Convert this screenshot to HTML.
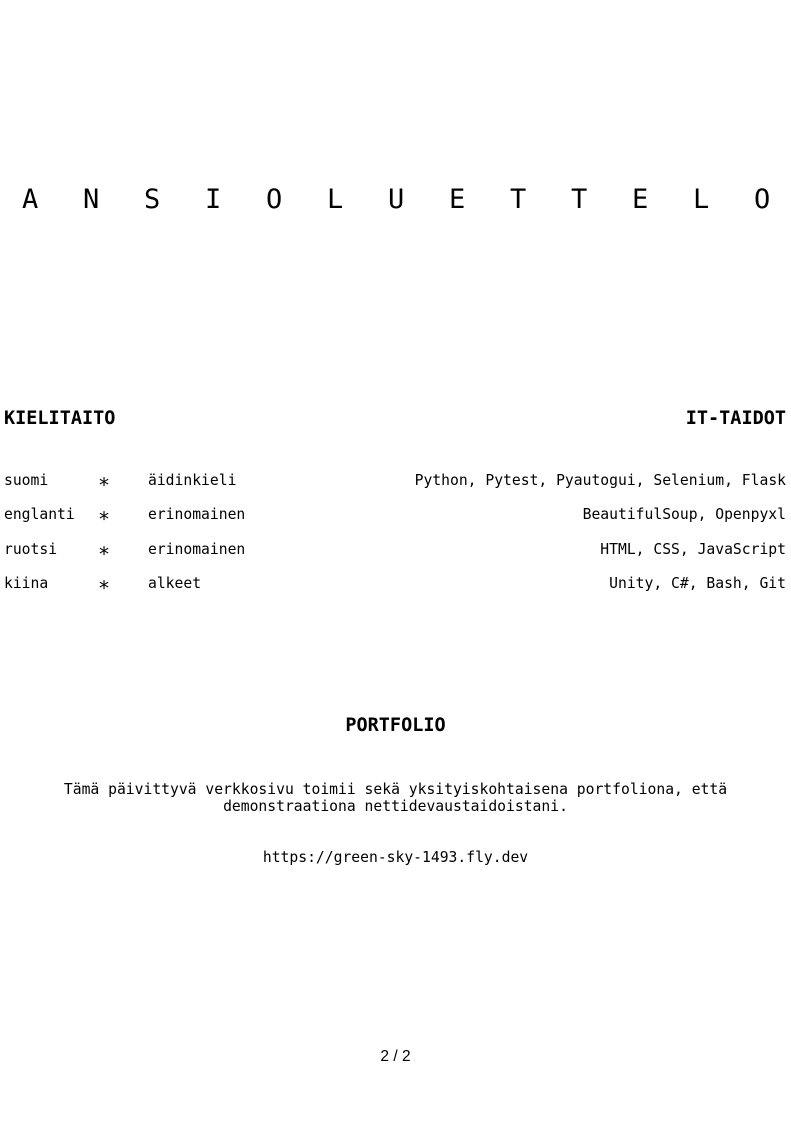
<!DOCTYPE html>
<html><head><meta charset="utf-8">
<style>
body{margin:0;width:791px;height:1122px;background:#fff;position:relative;font-family:"DejaVu Sans Mono","Liberation Mono",monospace;color:#000;}
.a{position:absolute;white-space:pre;line-height:1;}
.t{font-size:27px;}
.h{font-size:18.5px;font-weight:bold;}
.n{font-size:14.7px;}
.s{font-size:20px;}
.r{right:5px;text-align:right;}
</style></head><body>
<div class="a t" style="top:186px;left:0;width:791px;height:30px">
<span style="position:absolute;top:0;left:22px">A</span><span style="position:absolute;top:0;left:83px">N</span><span style="position:absolute;top:0;left:144px">S</span><span style="position:absolute;top:0;left:205px">I</span><span style="position:absolute;top:0;left:266px">O</span><span style="position:absolute;top:0;left:327px">L</span><span style="position:absolute;top:0;left:388px">U</span><span style="position:absolute;top:0;left:449px">E</span><span style="position:absolute;top:0;left:510px">T</span><span style="position:absolute;top:0;left:571px">T</span><span style="position:absolute;top:0;left:632px">E</span><span style="position:absolute;top:0;left:693px">L</span><span style="position:absolute;top:0;left:754px">O</span>
</div>
<div class="a h" style="top:410px;left:4px">KIELITAITO</div>
<div class="a h r" style="top:410px">IT-TAIDOT</div>

<div class="a n" style="top:474px;left:4px">suomi</div><div class="a s" style="top:471px;left:98px">∗</div><div class="a n" style="top:474px;left:148px">äidinkieli</div>
<div class="a n" style="top:508px;left:4px">englanti</div><div class="a s" style="top:505px;left:98px">∗</div><div class="a n" style="top:508px;left:148px">erinomainen</div>
<div class="a n" style="top:543px;left:4px">ruotsi</div><div class="a s" style="top:540px;left:98px">∗</div><div class="a n" style="top:543px;left:148px">erinomainen</div>
<div class="a n" style="top:577px;left:4px">kiina</div><div class="a s" style="top:574px;left:98px">∗</div><div class="a n" style="top:577px;left:148px">alkeet</div>

<div class="a n r" style="top:474px">Python, Pytest, Pyautogui, Selenium, Flask</div>
<div class="a n r" style="top:508px">BeautifulSoup, Openpyxl</div>
<div class="a n r" style="top:543px">HTML, CSS, JavaScript</div>
<div class="a n r" style="top:577px">Unity, C#, Bash, Git</div>

<div class="a h" style="top:717px;left:0;width:791px;text-align:center">PORTFOLIO</div>
<div class="a n" style="top:781px;left:0;width:791px;text-align:center;line-height:17px">Tämä päivittyvä verkkosivu toimii sekä yksityiskohtaisena portfoliona, että
demonstraationa nettidevaustaidoistani.</div>
<div class="a n" style="top:851px;left:0;width:791px;text-align:center">https://green-sky-1493.fly.dev</div>
<div class="a" style="top:1049px;left:0;width:791px;text-align:center;font-family:'Liberation Sans',sans-serif;font-size:15.5px">2 / 2</div>
</body></html>
